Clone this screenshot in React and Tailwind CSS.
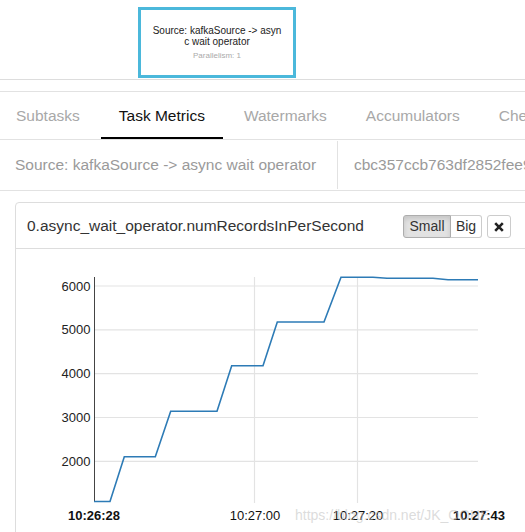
import React from "react";

const tabs = ["Subtasks", "Task Metrics", "Watermarks", "Accumulators", "Checkpoints"];

function Chart() {
  const grid = [
    [286, "6000"],
    [329.8, "5000"],
    [373.6, "4000"],
    [417.5, "3000"],
    [461.3, "2000"],
  ];
  const data =
    "M94,501.5 L110,501.5 L124.3,456.7 L155.3,456.7 L170.7,411.3 L217,411.3 L231.7,365.7 L263,365.7 L277.3,322 L324,322 L341,277.3 L373,277.3 L387,278.3 L433,278.3 L448,279.7 L478,279.7";
  return (
    <svg width="509" height="283" viewBox="16 249 509 283" className="block">
      {grid.map(([y, t]) => (
        <g key={t}>
          <line x1="94" x2="478" y1={y} y2={y} stroke="#e3e3e3" strokeWidth="1.2" />
          <text x="90.5" y={y + 4.5} textAnchor="end" fontSize="13" fill="#222" fontFamily="Liberation Sans, Arial, sans-serif">
            {t}
          </text>
        </g>
      ))}
      <line x1="254.5" x2="254.5" y1="277" y2="503" stroke="#e3e3e3" strokeWidth="1.2" />
      <line x1="357.5" x2="357.5" y1="277" y2="503" stroke="#e3e3e3" strokeWidth="1.2" />
      <line x1="94.5" x2="94.5" y1="277" y2="502" stroke="#444" strokeWidth="1" />
      <path d={data} fill="none" stroke="#2d7bb6" strokeWidth="1.6" strokeLinejoin="miter" />
      <g fontSize="13" fill="#111" fontFamily="Liberation Sans, Arial, sans-serif">
        <text x="94" y="520" textAnchor="middle" fontWeight="bold">10:26:28</text>
        <text x="255" y="520" textAnchor="middle">10:27:00</text>
        <text x="358" y="520" textAnchor="middle">10:27:20</text>
        <text x="479" y="520" textAnchor="middle" fontWeight="bold">10:27:43</text>
      </g>
    </svg>
  );
}

export default function App() {
  return (
    <div className="relative w-[525px] h-[532px] overflow-hidden bg-white font-['Liberation_Sans',Arial,sans-serif]">
      {/* graph pane */}
      <div className="h-[80px] border-b border-[#dddddd] pt-[7px] pl-[138px]">
        <div className="w-[158px] h-[71px] border-[3px] border-[#4bb8db] bg-white flex flex-col items-center pt-[15px]">
          <div className="w-[132px] text-center text-[10px] leading-[11px] text-[#222] break-all">
            Source: kafkaSource -&gt; async wait operator
          </div>
          <div className="mt-[4px] text-[8px] leading-[10px] text-[#aaa]">Parallelism: 1</div>
        </div>
      </div>

      {/* tabs */}
      <div className="mt-[11px] border-t border-b border-[#e2e2e2] flex -ml-[2px] gap-[3px] whitespace-nowrap">
        {tabs.map((t) => (
          <div
            key={t}
            className={
              t === "Task Metrics"
                ? "h-[47px] px-[18px] flex items-center text-[15.5px] text-[#111] border-b-[2px] border-black pt-[2px]"
                : "h-[47px] px-[18px] flex items-center text-[15.5px] text-[#a8a8a8]"
            }
          >
            {t}
          </div>
        ))}
      </div>

      {/* info row */}
      <div className="h-[51px] border-b border-[#e2e2e2] flex whitespace-nowrap text-[15.5px] text-[#9a9a9a]">
        <div className="pl-[15px] w-[338px] shrink-0 border-r border-[#e2e2e2] flex items-center my-[1px]">
          Source: kafkaSource -&gt; async wait operator
        </div>
        <div className="pl-[16px] flex items-center">cbc357ccb763df2852fee9a1c2e47bd8</div>
      </div>

      {/* metric card */}
      <div className="mt-[11px] ml-[15px] w-[520px] h-[400px] border border-[#dddddd] rounded-[4px]">
        <div className="h-[46px] border-b border-[#dddddd] flex items-center pl-[11px]">
          <div className="text-[15.5px] text-[#333] whitespace-nowrap">0.async_wait_operator.numRecordsInPerSecond</div>
          <div className="ml-auto mr-[23px] flex items-center gap-[5px] pt-[2px]">
            <div className="flex">
              <div className="w-[48px] h-[23px] flex items-center justify-center text-[14px] text-[#333] bg-[#e2e2e2] border border-[#adadad] rounded-l-[3px] shadow-[inset_0_3px_5px_rgba(0,0,0,0.125)]">
                Small
              </div>
              <div className="w-[31px] h-[23px] flex items-center justify-center text-[14px] text-[#333] bg-white border border-l-0 border-[#cccccc] rounded-r-[3px]">
                Big
              </div>
            </div>
            <div className="w-[24px] h-[23px] flex items-center justify-center bg-white border border-[#cccccc] rounded-[3px]">
              <svg width="10" height="10" viewBox="0 0 10 10">
                <path d="M1.2 1.2 L8.8 8.8 M8.8 1.2 L1.2 8.8" stroke="#222" strokeWidth="2.6" strokeLinecap="butt" />
              </svg>
            </div>
          </div>
        </div>
        <Chart />
      </div>

      {/* watermark */}
      <div className="absolute left-[295px] top-[506px] text-[14px] leading-[18px] text-[rgba(190,190,190,0.55)] whitespace-nowrap pointer-events-none">
        https://blog.csdn.net/JK_OOHE
      </div>
    </div>
  );
}
